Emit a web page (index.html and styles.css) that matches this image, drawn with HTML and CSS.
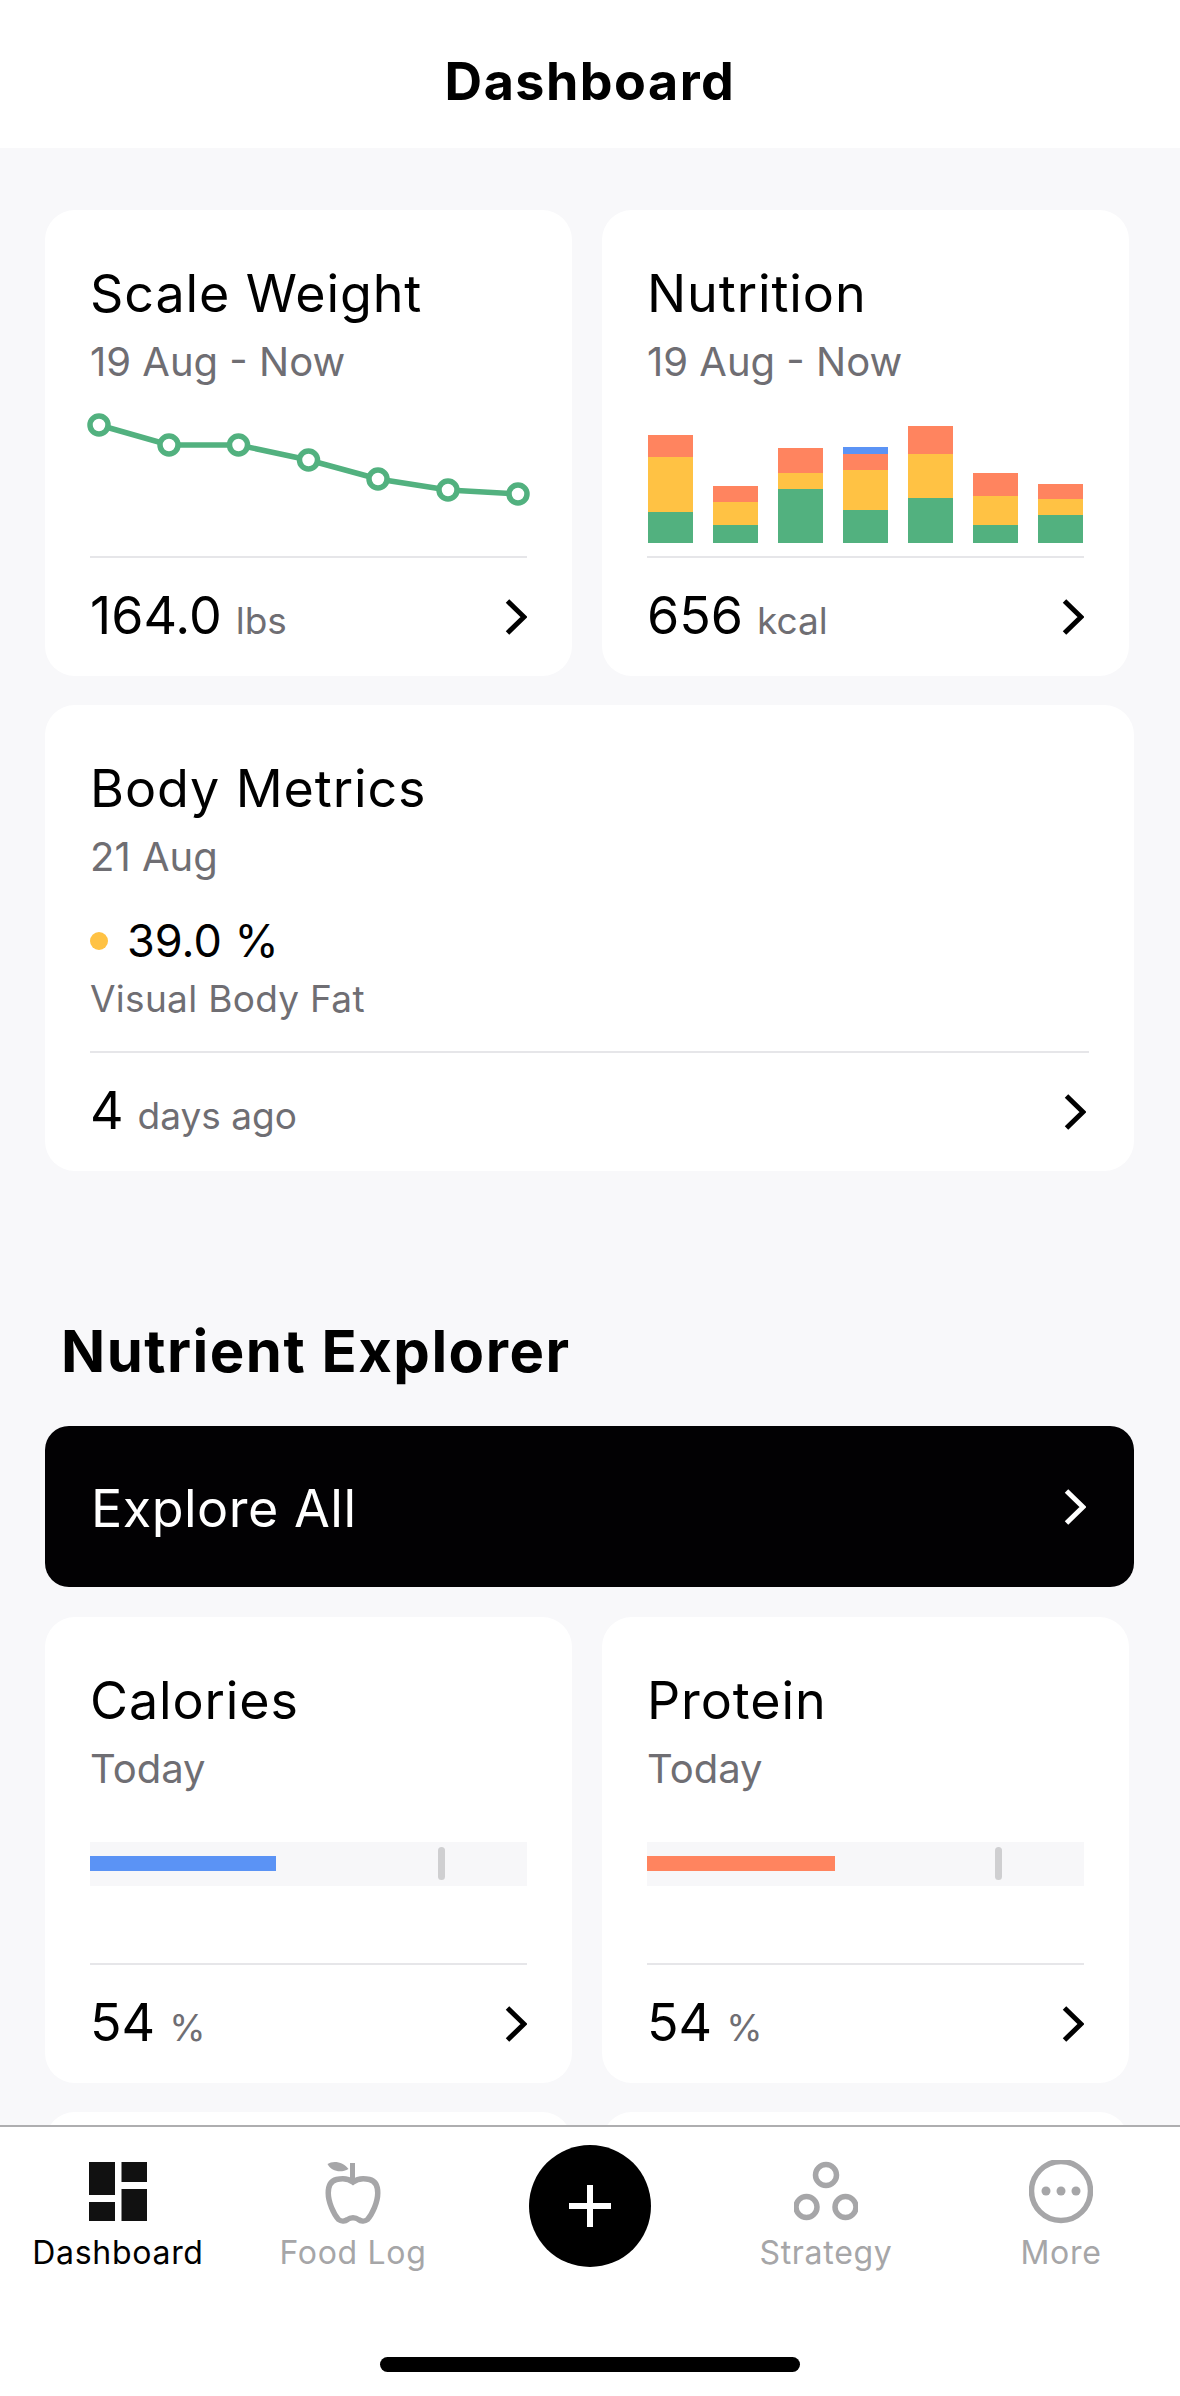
FILE: index.html
```html
<!DOCTYPE html>
<html lang="en">
<head>
<meta charset="utf-8">
<title>Dashboard</title>
<link rel="stylesheet" href="styles.css">
</head>
<body>
<div class="page">
  <header class="top"><h1>Dashboard</h1></header>
  <main class="main">
    <div class="row">
      <section class="card">
        <h2 class="title">Scale Weight</h2>
        <p class="sub">19 Aug - Now</p>
        <svg class="chart" viewBox="0 0 437 100" width="437" height="100">
          <polyline class="trend" points="9,11 79,31 148.500,31 218.500,46 288,65 358,76 428,80"/>
          <circle class="pt" cx="9" cy="11" r="9"/>
          <circle class="pt" cx="79" cy="31" r="9"/>
          <circle class="pt" cx="148.500" cy="31" r="9"/>
          <circle class="pt" cx="218.500" cy="46" r="9"/>
          <circle class="pt" cx="288" cy="65" r="9"/>
          <circle class="pt" cx="358" cy="76" r="9"/>
          <circle class="pt" cx="428" cy="80" r="9"/>
        </svg>
        <div class="foot">
          <span class="val">164.0</span><span class="unit">lbs</span>
          <svg class="chev" viewBox="0 0 22 36" width="22" height="36"><path d="M2.500 2L19 18L2.500 34"/></svg>
        </div>
      </section>
      <section class="card">
        <h2 class="title">Nutrition</h2>
        <p class="sub">19 Aug - Now</p>
        <div class="bars">
          <div class="bar"><i class="o" style="height:22px"></i><i class="y" style="height:55px"></i><i class="g" style="height:31px"></i></div>
          <div class="bar"><i class="o" style="height:16px"></i><i class="y" style="height:23px"></i><i class="g" style="height:18px"></i></div>
          <div class="bar"><i class="o" style="height:25px"></i><i class="y" style="height:16px"></i><i class="g" style="height:54px"></i></div>
          <div class="bar"><i class="b" style="height:7px"></i><i class="o" style="height:16px"></i><i class="y" style="height:40px"></i><i class="g" style="height:33px"></i></div>
          <div class="bar"><i class="o" style="height:28px"></i><i class="y" style="height:44px"></i><i class="g" style="height:45px"></i></div>
          <div class="bar"><i class="o" style="height:23px"></i><i class="y" style="height:29px"></i><i class="g" style="height:18px"></i></div>
          <div class="bar"><i class="o" style="height:15px"></i><i class="y" style="height:16px"></i><i class="g" style="height:28px"></i></div>
        </div>
        <div class="foot">
          <span class="val">656</span><span class="unit">kcal</span>
          <svg class="chev" viewBox="0 0 22 36" width="22" height="36"><path d="M2.500 2L19 18L2.500 34"/></svg>
        </div>
      </section>
    </div>
    <section class="card wide">
      <h2 class="title">Body Metrics</h2>
      <p class="sub">21 Aug</p>
      <div class="metric"><span class="dot"></span><span class="metric-val">39.0 %</span></div>
      <p class="metric-name">Visual Body Fat</p>
      <div class="foot">
        <span class="val">4</span><span class="unit">days ago</span>
        <svg class="chev" viewBox="0 0 22 36" width="22" height="36"><path d="M2.500 2L19 18L2.500 34"/></svg>
      </div>
    </section>
    <h2 class="section">Nutrient Explorer</h2>
    <div class="explore">
      <span class="explore-label">Explore All</span>
      <svg class="chev light" viewBox="0 0 22 36" width="22" height="36"><path d="M2.500 2L19 18L2.500 34"/></svg>
    </div>
    <div class="row">
      <section class="card">
        <h2 class="title">Calories</h2>
        <p class="sub">Today</p>
        <div class="track"><div class="fill blue"></div><div class="mark"></div></div>
        <div class="foot">
          <span class="val">54</span><span class="unit">%</span>
          <svg class="chev" viewBox="0 0 22 36" width="22" height="36"><path d="M2.500 2L19 18L2.500 34"/></svg>
        </div>
      </section>
      <section class="card">
        <h2 class="title">Protein</h2>
        <p class="sub">Today</p>
        <div class="track"><div class="fill orange"></div><div class="mark"></div></div>
        <div class="foot">
          <span class="val">54</span><span class="unit">%</span>
          <svg class="chev" viewBox="0 0 22 36" width="22" height="36"><path d="M2.500 2L19 18L2.500 34"/></svg>
        </div>
      </section>
    </div>
    <div class="row">
      <section class="card"></section>
      <section class="card"></section>
    </div>
  </main>
  <nav class="nav">
    <div class="tabs">
      <div class="tab active">
        <svg class="ico" viewBox="0 0 64 64" width="64" height="64">
          <rect x="3" y="2" width="26" height="33"/><rect x="35.500" y="2" width="25.500" height="20"/><rect x="3" y="42" width="26" height="19"/><rect x="35.500" y="29" width="25.500" height="32"/>
        </svg>
        <span>Dashboard</span>
      </div>
      <div class="tab">
        <svg class="ico" viewBox="0 0 64 64" width="64" height="64">
          <g transform="translate(4.500 1)">
            <path class="ln" d="M27.500 21C23 17.500 17 17 11 18.500C5 20 2.750 26 2.750 32C2.750 41 8 53 13 58.500C16 61 20 60 22 58.500C25 56 30 56 33 58.500C35 60 39 61 42 58.500C47 53 52.250 41 52.250 32C52.250 26 50 20 44 18.500C38 17 32 17.500 27.500 21Z"/>
            <rect class="gr" x="24.500" y="2" width="5" height="18"/>
            <path class="gr" d="M2 3C8 -1 18 1 23 8C16 12 6 11 2 3Z"/>
          </g>
        </svg>
        <span>Food Log</span>
      </div>
      <div class="add">
        <svg viewBox="0 0 44 44" width="44" height="44"><path d="M22 1V43M1 22H43"/></svg>
      </div>
      <div class="tab">
        <svg class="ico" viewBox="0 0 64 64" width="64" height="64">
          <circle class="ln" cx="32" cy="15" r="10.500"/><circle class="ln" cx="12.500" cy="47" r="10.500"/><circle class="ln" cx="51.500" cy="47" r="10.500"/>
        </svg>
        <span>Strategy</span>
      </div>
      <div class="tab">
        <svg class="ico" viewBox="0 0 64 64" width="64" height="64">
          <circle class="ln" cx="32" cy="31" r="29.500"/><circle class="gr" cx="17" cy="31" r="4.500"/><circle class="gr" cx="32" cy="31" r="4.500"/><circle class="gr" cx="47" cy="31" r="4.500"/>
        </svg>
        <span>More</span>
      </div>
    </div>
    <div class="home"></div>
  </nav>
</div>
</body>
</html>
```

FILE: styles.css
```css
* { box-sizing: border-box; margin: 0; padding: 0; }
html, body { width: 1180px; height: 2396px; overflow: hidden; background: #fff; }
body { font-family: Inter, "Liberation Sans", sans-serif; color: #000; }
.page { position: relative; width: 1180px; height: 2396px; overflow: hidden; background: #f8f8fa; }

.top { height: 148px; background: #fff; text-align: center; padding-top: 46px; }
.top h1 { font-size: 52px; line-height: 72px; font-weight: 700; letter-spacing: 1.500px; }

.main { padding: 62px 0 0 45px; }
.row { display: grid; grid-template-columns: 527px 527px; column-gap: 30px; }
.card { display: flex; flex-direction: column; height: 466px; padding: 0 45px; background: #fff; border-radius: 30px; }
.wide { width: 1089px; margin-top: 29px; }
.row + .row { margin-top: 29px; }

.title { font-size: 52px; line-height: 64px; font-weight: 400; letter-spacing: 0.900px; margin-top: 52px; }
.sub { font-size: 40px; line-height: 54px; color: #6f6e73; margin-top: 9px; }

.chart { display: block; margin-top: 25px; overflow: visible; }
.trend { fill: none; stroke: #52b17f; stroke-width: 5.500; }
.pt { fill: #fff; stroke: #52b17f; stroke-width: 5.500; }

.bars { display: flex; align-items: flex-end; gap: 20px; height: 130px; margin: auto 0 0 1px; }
.bar { display: flex; flex-direction: column; width: 45px; }
.bar i { display: block; }
.o { background: #ff845f; }
.y { background: #ffc244; }
.g { background: #52b17f; }
.b { background: #5b93f5; }

.foot { display: flex; align-items: baseline; height: 120px; margin-top: auto; padding-top: 23px; border-top: 2px solid #e6e6e9; }
.bars + .foot { margin-top: 13px; }
.val { font-size: 52px; line-height: 70px; }
.unit { font-size: 37px; line-height: 70px; color: #6f6e73; margin-left: 14px; }
.chev { margin: 18px 0 0 auto; align-self: flex-start; fill: none; stroke: #000; stroke-width: 5; }
.wide .chev { margin-right: 3px; }
.light { stroke: #fff; margin: 0; align-self: center; }

.metric { display: flex; align-items: center; margin-top: 27px; }
.dot { width: 18px; height: 18px; border-radius: 50%; background: #ffc244; }
.metric-val { font-size: 45px; line-height: 60px; margin-left: 19px; }
.metric-name { font-size: 37px; line-height: 50px; letter-spacing: 0.300px; color: #6f6e73; margin-top: 3px; }

.section { font-size: 58px; line-height: 76px; font-weight: 700; letter-spacing: 1.500px; margin: 142px 0 0 16px; }
.explore { display: flex; align-items: center; justify-content: space-between; width: 1089px; height: 161px; margin-top: 37px; padding: 0 48px 0 46px; background: #020103; border-radius: 24px; color: #fff; font-size: 52px; letter-spacing: 0.500px; }
.explore-label { padding-top: 4px; }
.explore + .row { margin-top: 30px; }

.track { position: relative; height: 44px; margin-top: 46px; background: #f7f7f9; }
.fill { position: absolute; left: 0; top: 14px; height: 15px; width: 186px; }
.blue { background: #5b93f5; }
.orange { background: #ff845f; width: 188px; }
.mark { position: absolute; left: 348px; top: 5px; width: 7px; height: 33px; border-radius: 4px; background: #cfcfd1; }

.nav { position: absolute; left: 0; right: 0; top: 2125px; bottom: 0; background: #fff; border-top: 2px solid #aeaeb0; }
.tabs { display: grid; grid-template-columns: 236px 234px 240px 232px 238px; height: 146px; padding-top: 33px; }
.tab { display: flex; flex-direction: column; align-items: center; font-size: 32px; line-height: 44px; letter-spacing: 0.700px; color: #a6a6a8; }
.tab span { margin-top: 7px; }
.active { color: #000; }
.ico { display: block; fill: #111; }
.ln { fill: none; stroke: #a6a6a8; stroke-width: 5.500; }
.gr { fill: #a6a6a8; stroke: none; }
.add { display: flex; align-items: center; justify-content: center; justify-self: center; width: 122px; height: 122px; margin-top: -15px; border-radius: 50%; background: #000; }
.add svg { fill: none; stroke: #fff; stroke-width: 6; }
.home { width: 420px; height: 15px; margin: 84px auto 0; border-radius: 8px; background: #000; }
```
